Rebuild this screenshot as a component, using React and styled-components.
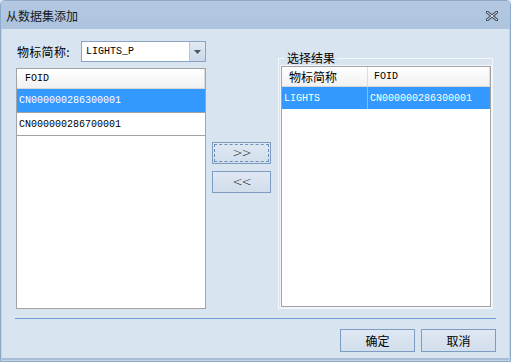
import React from "react";
import styled, { createGlobalStyle } from "styled-components";

const Global = createGlobalStyle`
  html, body { margin: 0; padding: 0; background: #d9e4f1; }
  body { font-family: "Noto Sans CJK SC", "Liberation Sans", sans-serif; font-size: 12px; color: #000; }
`;

const Window = styled.div`
  width: 511px;
  height: 362px;
  box-sizing: border-box;
  border: 1px solid #8ea8c8;
  border-radius: 5px 5px 0 0;
  background: #d9e4f1;
  display: flex;
  flex-direction: column;
  box-shadow: inset 0 0 0 1px #c3d3e6, inset 0 -3px 0 #a7bcd7;
  overflow: hidden;
`;

const TitleBar = styled.div`
  height: 28px;
  flex: none;
  background: linear-gradient(#b4c8e0, #adc3de);
  display: flex;
  align-items: center;
  justify-content: space-between;
  padding: 0 12px 0 5px;
`;

const Title = styled.span`
  font-size: 12px;
  color: #111a26;
`;

const Close = styled.svg`
  width: 12px;
  height: 10px;
  margin-top: 2px;
`;

const Body = styled.div`
  flex: 1;
  display: flex;
  flex-direction: column;
  padding: 12px 14px 0 15px;
`;

const Main = styled.div`
  height: 268px;
  display: flex;
`;

const LeftPanel = styled.div`
  width: 190px;
  display: flex;
  flex-direction: column;
  gap: 6px;
`;

const ComboRow = styled.div`
  height: 21px;
  display: flex;
  align-items: center;
`;

const Label = styled.span`
  width: 64px;
  padding-left: 1px;
  font-size: 12px;
  letter-spacing: 0.3px;
`;

const Combo = styled.div`
  width: 125px;
  height: 21px;
  box-sizing: border-box;
  border: 1px solid #8aa4c6;
  background: #fff;
  display: flex;
`;

const ComboText = styled.span`
  flex: 1;
  font-family: "Liberation Mono", monospace;
  font-size: 10px;
  line-height: 19px;
  padding-left: 4px;
`;

const ComboBtn = styled.div`
  width: 15px;
  border-left: 1px solid #b5c6dc;
  background: linear-gradient(#e2eaf4, #cbd8e8);
  display: flex;
  align-items: center;
  justify-content: center;
`;

const List = styled.div`
  flex: 1;
  box-sizing: border-box;
  border: 1px solid #a3a3a3;
  background: #fff;
  display: flex;
  flex-direction: column;
  box-shadow: ${(p) => (p.$soft ? "0 0 0 1px #f2f6fa" : "none")};
`;

const Header = styled.div`
  height: 19px;
  display: flex;
  border-bottom: 1px solid #d8d8d8;
  background: linear-gradient(#ffffff, #f1f1f1);
`;

const HeadCell = styled.div`
  width: ${(p) => p.$w};
  box-sizing: border-box;
  padding-left: ${(p) => p.$pad || "8px"};
  font-family: ${(p) => (p.$cjk ? '"Noto Sans CJK SC", sans-serif' : '"Liberation Mono", monospace')};
  font-size: ${(p) => (p.$cjk ? "12px" : "10px")};
  line-height: 19px;
  border-right: 1px solid #dcdcdc;
`;

const Rows = styled.div`
  display: flex;
  flex-direction: column;
  align-self: flex-start;
  width: ${(p) => p.$w};
  border-right: ${(p) => (p.$box ? "1px solid #a3a3a3" : "none")};
  border-bottom: ${(p) => (p.$box ? "1px solid #a3a3a3" : "none")};
`;

const Row = styled.div`
  height: ${(p) => p.$h};
  display: flex;
  align-items: center;
  background: ${(p) => (p.$sel ? "#3399ff" : "#fff")};
  color: ${(p) => (p.$sel ? "#fff" : "#000")};
  border-bottom: ${(p) => (p.$sel && p.$line ? "1px solid #a3a3a3" : "none")};
`;

const Cell = styled.div`
  width: ${(p) => p.$w};
  box-sizing: border-box;
  padding-left: ${(p) => p.$pad || "2px"};
  font-family: "Liberation Mono", monospace;
  font-size: 10px;
  height: 100%;
  display: flex;
  align-items: center;
  border-right: ${(p) => (p.$div ? "1px solid #9fb6cf" : "none")};
`;

const Middle = styled.div`
  width: 59px;
  margin-left: 6px;
  padding-top: 101px;
  display: flex;
  flex-direction: column;
  gap: 7px;
`;

const ArrowBtn = styled.div`
  height: 22px;
  box-sizing: border-box;
  border: 1px solid #7d9cc2;
  background: linear-gradient(#dfe8f3, #d2deec);
  display: flex;
  align-items: center;
  justify-content: center;
  font-family: "DejaVu Sans", sans-serif;
  font-size: 12px;
  font-weight: 300;
  letter-spacing: -1px;
  color: #222;
  outline: ${(p) => (p.$focus ? "1px dashed #6f8fb8" : "none")};
  outline-offset: -3px;
`;

const Group = styled.div`
  width: 215px;
  margin-left: 7px;
  margin-top: 17px;
  box-sizing: border-box;
  border: 1px solid #f3f7fb;
  display: flex;
  flex-direction: column;
  padding: 0 1px 1px 2px;
`;

const Legend = styled.span`
  align-self: flex-start;
  margin: -9px 0 0 4px;
  padding: 0 2px;
  background: #d9e4f1;
  font-size: 12px;
  line-height: 16px;
`;

const Separator = styled.div`
  height: 1px;
  background: #6f9bd0;
  margin-top: 9px;
  margin-left: -1px;
`;

const Footer = styled.div`
  display: flex;
  justify-content: flex-end;
  gap: 6px;
  margin-top: 10px;
`;

const Btn = styled.div`
  width: 75px;
  height: 23px;
  box-sizing: border-box;
  border: 1px solid #7d9cc2;
  background: linear-gradient(#dfe8f3, #d2deec);
  display: flex;
  align-items: center;
  justify-content: center;
  font-size: 12px;
`;

export default function App() {
  return (
    <>
      <Global />
      <Window>
        <TitleBar>
          <Title>从数据集添加</Title>
          <Close viewBox="0 0 12 10">
            <path d="M1 1 L11 9 M11 1 L1 9" stroke="#3f4f63" strokeWidth="3" strokeLinecap="square" />
            <path d="M1 1 L11 9 M11 1 L1 9" stroke="#e9eef5" strokeWidth="1" />
          </Close>
        </TitleBar>
        <Body>
          <Main>
            <LeftPanel>
              <ComboRow>
                <Label>物标简称:</Label>
                <Combo>
                  <ComboText>LIGHTS_P</ComboText>
                  <ComboBtn>
                    <svg width="7" height="4" viewBox="0 0 7 4">
                      <path d="M0 0 H7 L3.5 4 Z" fill="#4a5560" />
                    </svg>
                  </ComboBtn>
                </Combo>
              </ComboRow>
              <List>
                <Header>
                  <HeadCell $w="100%">FOID</HeadCell>
                </Header>
                <Rows $w="188px" $box>
                  <Row $h="23px" $sel $line>
                    <Cell $w="100%">CN000000286300001</Cell>
                  </Row>
                  <Row $h="22px">
                    <Cell $w="100%">CN000000286700001</Cell>
                  </Row>
                </Rows>
              </List>
            </LeftPanel>
            <Middle>
              <ArrowBtn $focus>&gt;&gt;</ArrowBtn>
              <ArrowBtn>&lt;&lt;</ArrowBtn>
            </Middle>
            <Group>
              <Legend>选择结果</Legend>
              <List $soft>
                <Header>
                  <HeadCell $w="86px" $cjk $pad="7px">物标简称</HeadCell>
                  <HeadCell $w="122px" $pad="6px">FOID</HeadCell>
                </Header>
                <Rows $w="208px">
                  <Row $h="22px" $sel>
                    <Cell $w="86px" $div>LIGHTS</Cell>
                    <Cell $w="122px">CN000000286300001</Cell>
                  </Row>
                </Rows>
              </List>
            </Group>
          </Main>
          <Separator />
          <Footer>
            <Btn>确定</Btn>
            <Btn>取消</Btn>
          </Footer>
        </Body>
      </Window>
    </>
  );
}
